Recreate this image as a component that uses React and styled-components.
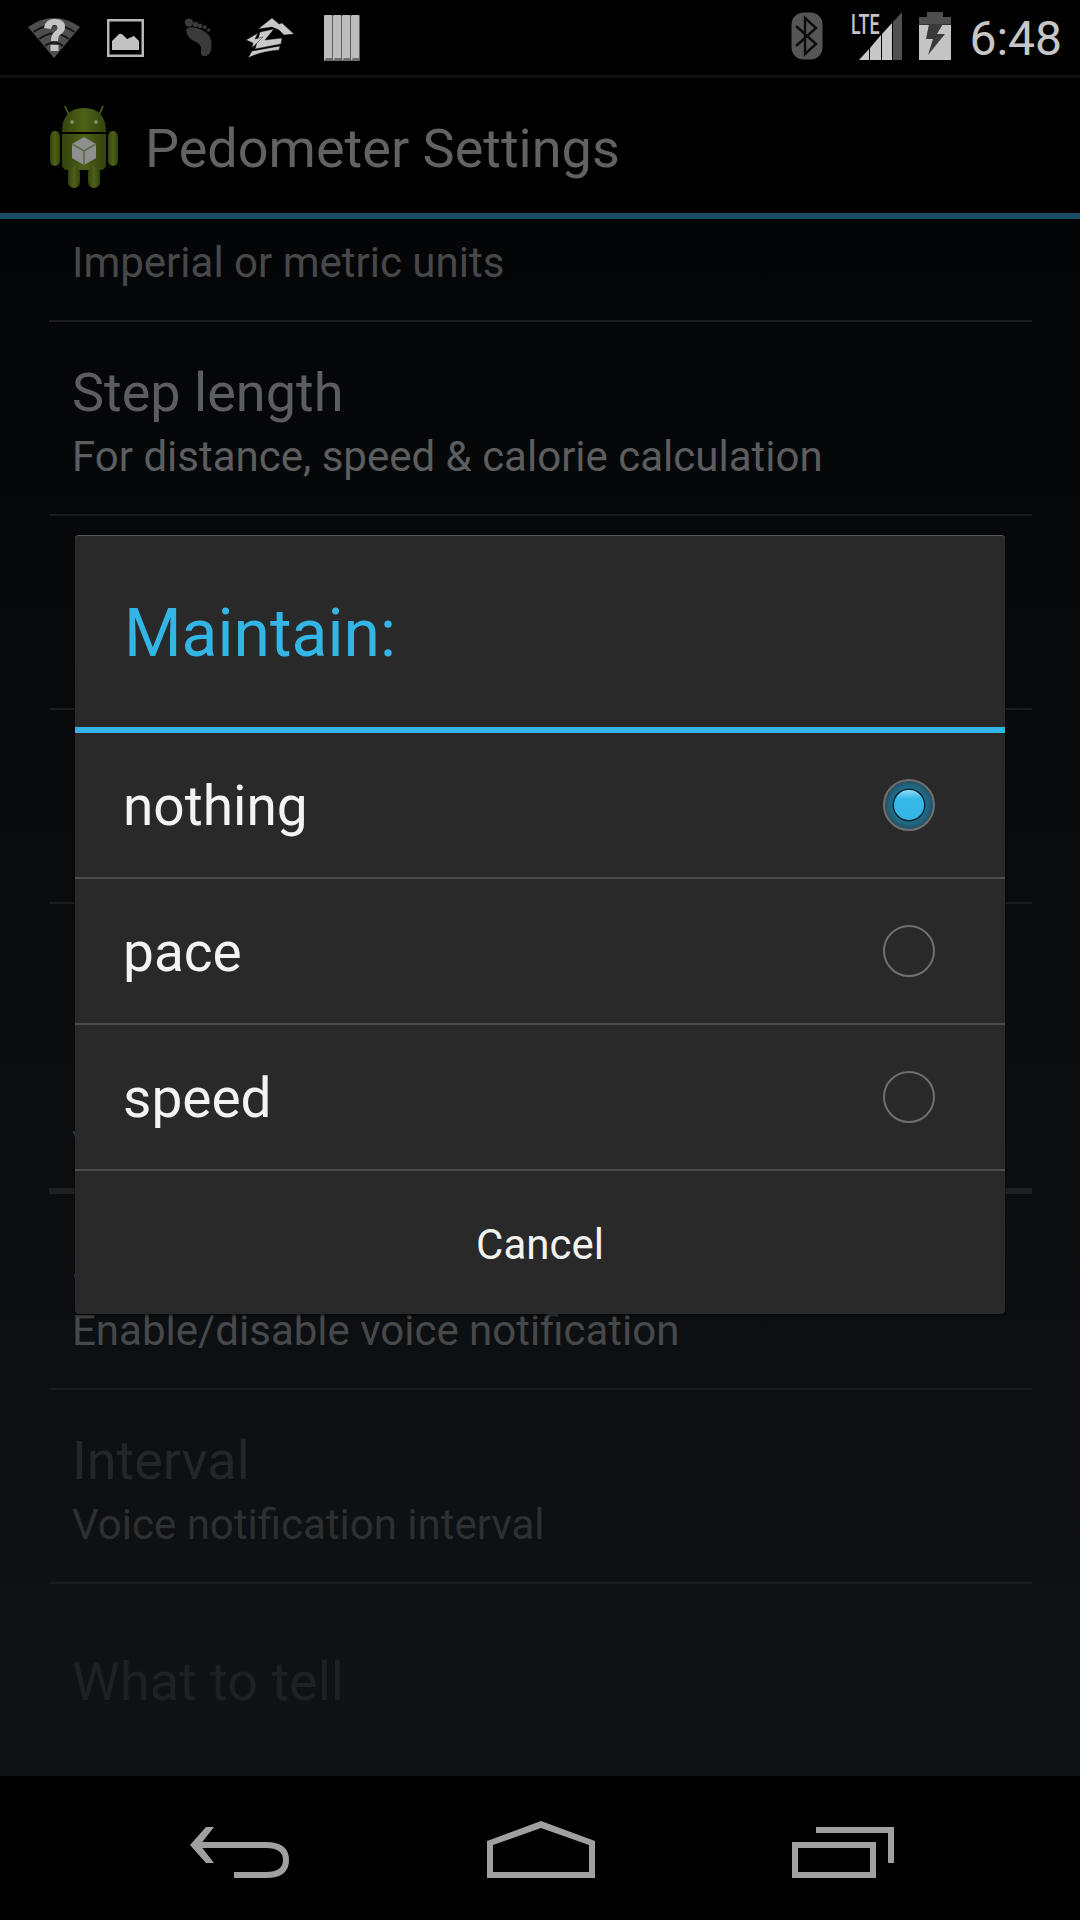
import React from "react";
import styled, { createGlobalStyle } from "styled-components";

const items = [
  { sub: "Imperial or metric units", clipped: true },
  { title: "Step length", sub: "For distance, speed & calorie calculation" },
  {},
  {},
];
const voiceItems = [
  { title: "Speak", sub: "Enable/disable voice notification", level: "mid" },
  { title: "Interval", sub: "Voice notification interval", level: "off", subLevel: "offSub" },
];
const options = [
  { label: "nothing", checked: true },
  { label: "pace" },
  { label: "speed" },
];

const WifiIcon = () => (
  <svg width="52" height="40" viewBox="0 0 52 40">
    <path d="M0 9 Q26 -9 52 9 L26 40 Z" fill="#4e4e4e" />
    <path d="M5.500 14 Q26 0 46.500 14 M11 21 Q26 10 41 21 M17 28 Q26 21 35 28" fill="none" stroke="#000" strokeWidth="2" opacity=".7" />
    <path d="M16 10 Q17 1 26.500 1 Q37 1 37 9 Q37 14 32.500 16.500 Q30 18 30 23 L23 23 Q23 16 27 13.500 Q30 11.500 29.500 9 Q29 7 26.500 7 Q23.500 7 23 11 Z M22.500 27 H30.500 V33 H22.500 Z" fill="#c4c4c4" />
  </svg>
);
const PictureIcon = () => (
  <svg width="37" height="38" viewBox="0 0 37 38">
    <rect x="1.250" y="1.250" width="34.500" height="35.500" fill="none" stroke="#b8b8b8" strokeWidth="2.500" />
    <path d="M5 31 V22 L12 15 Q14 14 16 16 L20 20 L27 17 L32 22 V31 Z" fill="#c2c2c2" />
  </svg>
);
const FootIcon = () => (
  <svg width="48" height="41" viewBox="-13 0 51 44" fill="#3a3a3a">
    <circle cx="6" cy="6" r="4.500" />
    <circle cx="13" cy="8" r="3" />
    <circle cx="18" cy="9.500" r="2.500" />
    <circle cx="23" cy="11" r="2.200" />
    <circle cx="27" cy="14" r="1.800" />
    <path d="M3 15 Q3 11 9 11 Q20 12 27 19 Q31 24 30 34 Q29 42 22 42 Q18 42 19 36 Q20 30 14 27 Q4 23 3 15 Z" />
  </svg>
);
const ZIcon = () => (
  <svg width="48" height="40" viewBox="0 0 48 40" fill="#c8c8c8" stroke="#000" strokeWidth=".4">
    <path d="M26 0 L33 6 L36 5 L48 16 L38 17 L33 12 L26 9 L12 11 Z" />
    <path d="M14 14 L28 11 L19 22 L36 20 L35 26 L9 31 Z" />
    <path d="M0 22 L12 15 L9 21 L17 19 L6 30 L7 25 Z" />
    <path d="M6 33 L34 28 L33 32 Q16 33 2 40 Z" />
  </svg>
);
const BarsIcon = () => (
  <svg width="39" height="46" viewBox="-3 0 39 46">
    {[0, 9, 18, 27].map((x) => (
      <g key={x}>
        <rect x={x} y="0" width="8.500" height="46" rx="1" fill="#bdbdbd" />
        <path d={`M${x} 46 l2 -3 h6.500 v3 z`} fill="#6c6c6c" />
      </g>
    ))}
  </svg>
);
const BluetoothIcon = () => (
  <svg width="32" height="48" viewBox="0 0 32 48">
    <rect x="0.500" y="0.500" width="31" height="47" rx="12" fill="#555" />
    <path d="M5 14 L25 32 L14 42 V6 L25 16 L5 34" fill="none" stroke="#0c0c0c" strokeWidth="2.400" />
  </svg>
);
const SignalIcon = () => (
  <svg width="44" height="48" viewBox="0 0 44 48">
    <path d="M0 48 L10 37 V48 Z M11 48 V36 L22 23 V48 Z M23 48 V22 L33 11 V48 Z" fill="#c8c8c8" />
    <path d="M34 48 V10 L43 0 V48 Z" fill="#505050" />
  </svg>
);
const BatteryIcon = () => (
  <svg width="32" height="48" viewBox="0 0 32 48">
    <path d="M8 0 H24 V5 H32 V13 H0 V5 H8 Z" fill="#4e4e4e" />
    <rect y="12" width="32" height="36" fill="#c4c4c4" />
    <path d="M0 12 H32 V13 H0 Z" fill="#333" />
    <path d="M10 12 H24 L18 22 H26 L9 43 L14 27 H7 Z" fill="#3a3a3a" />
  </svg>
);
const AndroidIcon = () => (
  <svg width="70" height="84" viewBox="0 0 70 84">
    <defs>
      <linearGradient id="droid" x1="0" y1="0" x2="1" y2="0">
        <stop offset="0" stopColor="#33430c" />
        <stop offset=".5" stopColor="#4e6118" />
        <stop offset="1" stopColor="#33430c" />
      </linearGradient>
    </defs>
    <path d="M20 11 L16 2 M50 11 L54 2" stroke="#4c5e18" strokeWidth="1.800" />
    <path d="M13 28 Q13 4 35 4 Q57 4 57 28 Z" fill="url(#droid)" />
    <circle cx="23" cy="18" r="2" fill="#7c8a62" />
    <circle cx="47" cy="18" r="2" fill="#7c8a62" />
    <path d="M13 30 H57 V60 Q57 66 51 66 H19 Q13 66 13 60 Z" fill="url(#droid)" />
    <rect x="1" y="27" width="10" height="35" rx="5" fill="url(#droid)" />
    <rect x="59" y="27" width="10" height="35" rx="5" fill="url(#droid)" />
    <rect x="19" y="62" width="12" height="22" rx="6" fill="url(#droid)" />
    <rect x="39" y="62" width="12" height="22" rx="6" fill="url(#droid)" />
    <path d="M35 33 L47 40 V54 L35 61 L23 54 V40 Z" fill="#8f8f8f" />
    <path d="M23 40 L35 47 L47 40 M35 47 V61" fill="none" stroke="#5a6a40" strokeWidth="1.500" />
  </svg>
);
const BackIcon = () => (
  <svg width="99" height="51" viewBox="0 0 99 51">
    <path d="M8 18 H76 Q96 18 96 33 Q96 48 76 48 H44" fill="none" stroke="#a0a0a0" strokeWidth="6" />
    <path d="M16 0 H24 L10 18 L24 36 H16 L0 18 Z" fill="#a0a0a0" />
  </svg>
);
const HomeIcon = () => (
  <svg width="108" height="57" viewBox="0 0 108 57">
    <path fillRule="evenodd" d="M0 57 V20 L54 0 L108 20 V57 Z M6 51 H102 V24 L54 7 L6 24 Z" fill="#a0a0a0" />
  </svg>
);
const RecentIcon = () => (
  <svg width="102" height="51" viewBox="0 0 102 51" fill="none" stroke="#a0a0a0" strokeWidth="6">
    <rect x="3" y="18" width="78" height="30" />
    <path d="M24 3 H99 V36" />
  </svg>
);

const App = () => (
  <>
    <GlobalStyle />
    <Screen>
      <StatusBar>
        <IconGroup>
          <WifiIcon />
          <PictureIcon />
          <FootIcon />
          <ZIcon />
          <BarsIcon />
        </IconGroup>
        <StatusRight>
          <BluetoothIcon />
          <LteWrap>
            <LteText>LTE</LteText>
            <SignalIcon />
          </LteWrap>
          <BatteryIcon />
          <Clock>6:48</Clock>
        </StatusRight>
      </StatusBar>
      <ActionBar>
        <AndroidIcon />
        <ActionTitle>Pedometer Settings</ActionTitle>
      </ActionBar>
      <List>
        {items.map((item, i) => (
          <Row key={i} $clipped={item.clipped}>
            {item.title && <RowTitle>{item.title}</RowTitle>}
            {item.sub && <RowSub $level={item.clipped ? "mid" : "high"}>{item.sub}</RowSub>}
          </Row>
        ))}
        <LastRow />
        <SectionHead>
          <SectionLabel>Voice</SectionLabel>
        </SectionHead>
        {voiceItems.map((item) => (
          <Row key={item.title}>
            <RowTitle $level={item.level}>{item.title}</RowTitle>
            <RowSub $level={item.subLevel || item.level}>{item.sub}</RowSub>
          </Row>
        ))}
        <Row $plain>
          <RowTitle $level="faint">What to tell</RowTitle>
        </Row>
      </List>
      <NavBar>
        <BackIcon />
        <HomeIcon />
        <RecentIcon />
      </NavBar>
      <Dialog>
        <DialogTitle>Maintain:</DialogTitle>
        {options.map((opt) => (
          <Option key={opt.label}>
            <OptionLabel>{opt.label}</OptionLabel>
            <Radio $checked={opt.checked} />
          </Option>
        ))}
        <CancelButton>Cancel</CancelButton>
      </Dialog>
    </Screen>
  </>
);

export default App;

const GlobalStyle = createGlobalStyle`
  html, body {
    margin: 0;
    padding: 0;
    background: #000;
  }
  * {
    box-sizing: border-box;
  }
  svg {
    display: block;
    flex: none;
  }
`;

const Screen = styled.div`
  position: relative;
  width: 1080px;
  height: 1920px;
  display: flex;
  flex-direction: column;
  overflow: hidden;
  background: #000;
  font-family: Roboto, "Liberation Sans", sans-serif;
`;

const StatusBar = styled.div`
  height: 78px;
  flex: none;
  display: flex;
  align-items: center;
  justify-content: space-between;
  padding: 0 18px 0 28px;
  border-bottom: 3px solid #111;
`;

const IconGroup = styled.div`
  display: flex;
  align-items: center;
  gap: 27px;
`;

const StatusRight = styled.div`
  display: flex;
  align-items: center;
  gap: 16px;
  margin-bottom: 3px;
`;

const LteWrap = styled.div`
  position: relative;
  margin-left: 20px;
`;

const LteText = styled.span`
  position: absolute;
  left: -8px;
  top: -1px;
  font-size: 28px;
  line-height: 28px;
  font-weight: 500;
  color: #c4c4c4;
  transform: scaleX(.64);
  transform-origin: left;
`;

const Clock = styled.span`
  font-size: 48px;
  line-height: 48px;
  color: #c6c6c6;
  margin: 6px 0 0 2px;
`;

const ActionBar = styled.div`
  height: 141px;
  flex: none;
  display: flex;
  align-items: center;
  gap: 26px;
  padding-left: 49px;
  border-bottom: 6px solid #1a4d63;
`;

const ActionTitle = styled.div`
  font-size: 54px;
  line-height: 60px;
  color: #626262;
  margin-top: 6px;
`;

const List = styled.div`
  flex: 1;
  display: flex;
  flex-direction: column;
  padding: 0 48px 0 49px;
  background: linear-gradient(#040506, #101316);
`;

const levels = {
  high: "#5c5d5e",
  mid: "#474849",
  off: "#232526",
  offSub: "#2d2f31",
  faint: "#1f2021",
};

const Row = styled.div`
  height: ${(p) => (p.$clipped ? "103px" : p.$plain ? "192px" : "194px")};
  flex: none;
  padding: ${(p) => (p.$clipped ? "10px" : p.$plain ? "68px" : "41px")} 24px 0 23px;
  border-bottom: ${(p) => (p.$plain ? "none" : "2px solid #191b1d")};
`;

const LastRow = styled.div`
  height: 192px;
  flex: none;
`;

const SectionHead = styled.div`
  height: 98px;
  flex: none;
  margin-bottom: 2px;
  padding: 27px 24px 0 23px;
  border-bottom: 6px solid #1e2022;
`;

const SectionLabel = styled.div`
  font-size: 42px;
  line-height: 48px;
  color: #3f4041;
`;

const RowTitle = styled.div`
  font-size: 54px;
  line-height: 60px;
  color: ${(p) => levels[p.$level || "high"]};
`;

const RowSub = styled.div`
  font-size: 42px;
  line-height: 58px;
  margin-top: 5px;
  color: ${(p) => levels[p.$level || "mid"]};
`;

const NavBar = styled.div`
  height: 144px;
  flex: none;
  display: flex;
  align-items: flex-end;
  justify-content: space-between;
  padding: 0 186px 42px 190px;
  background: #000;
`;

const Dialog = styled.div`
  position: absolute;
  left: 75px;
  top: 535px;
  width: 930px;
  background: #292929;
  border-top: 1px solid #555;
  border-radius: 4px;
  box-shadow: 0 2px 3px rgba(0, 0, 0, .6);
`;

const DialogTitle = styled.div`
  height: 197px;
  padding: 50px 49px 0;
  font-size: 66px;
  line-height: 96px;
  color: #33b5e5;
  border-bottom: 6px solid #33b5e5;
`;

const Option = styled.div`
  height: 146px;
  display: flex;
  align-items: center;
  justify-content: space-between;
  padding: 0 70px 0 48px;
  border-bottom: 2px solid #4c4c4c;
`;

const OptionLabel = styled.div`
  font-size: 55px;
  line-height: 60px;
  margin-top: 2px;
  color: #f3f3f3;
`;

const Radio = styled.div`
  position: relative;
  width: 52px;
  height: 52px;
  border-radius: 50%;
  border: 2px solid #6f6f6f;
  background: ${(p) =>
    p.$checked ? "radial-gradient(circle, #1c6f8e 0 50%, #2a4a58 75%, #3a4044 100%)" : "transparent"};

  &::after {
    content: "";
    display: ${(p) => (p.$checked ? "block" : "none")};
    position: absolute;
    left: 9px;
    top: 9px;
    width: 30px;
    height: 30px;
    border-radius: 50%;
    background: linear-gradient(#8fdcf5 0, #35b8e8 30%, #33b5e5 100%);
    box-shadow: 0 0 0 1.500px #10242e;
  }
`;

const CancelButton = styled.div`
  height: 143px;
  display: flex;
  align-items: center;
  justify-content: center;
  font-size: 42px;
  color: #f2f2f2;
  padding-top: 3px;
`;
